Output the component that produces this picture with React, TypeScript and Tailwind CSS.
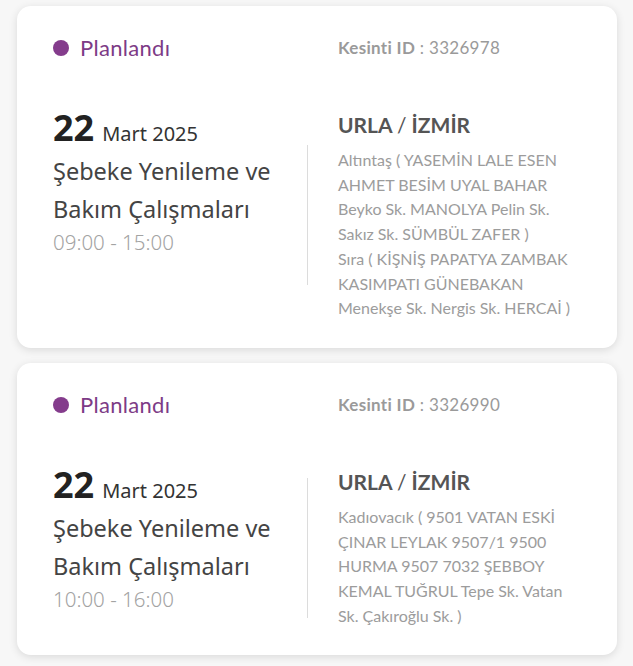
import React from 'react';

type Outage = {
  id: string;
  day: string;
  monthYear: string;
  title: string;
  time: string;
  place: string;
  streets: string[];
};

const outages: Outage[] = [
  {
    id: '3326978',
    day: '22',
    monthYear: 'Mart 2025',
    title: 'Şebeke Yenileme ve Bakım Çalışmaları',
    time: '09:00 - 15:00',
    place: 'İZMİR',
    streets: [
      'Altıntaş ( YASEMİN LALE ESEN AHMET BESİM UYAL BAHAR Beyko Sk. MANOLYA Pelin Sk. Sakız Sk. SÜMBÜL ZAFER )',
      'Sıra ( KİŞNİŞ PAPATYA ZAMBAK KASIMPATI GÜNEBAKAN Menekşe Sk. Nergis Sk. HERCAİ )',
    ],
  },
  {
    id: '3326990',
    day: '22',
    monthYear: 'Mart 2025',
    title: 'Şebeke Yenileme ve Bakım Çalışmaları',
    time: '10:00 - 16:00',
    place: 'İZMİR',
    streets: [
      'Kadıovacık ( 9501 VATAN ESKİ ÇINAR LEYLAK 9507/1 9500 HURMA 9507 7032 ŞEBBOY KEMAL TUĞRUL Tepe Sk. Vatan Sk. Çakıroğlu Sk. )',
    ],
  },
];

function OutageCard({ item }: { item: Outage }) {
  return (
    <div className="bg-white rounded-[14px] shadow-[0_2px_8px_rgba(0,0,0,0.12)] pl-9 pr-9 pt-[28px] pb-[27px]">
      {/* Header row */}
      <div className="flex items-center">
        <div className="w-[285px] flex items-center gap-[11px]">
          <span className="w-4 h-4 rounded-full bg-[#843c8c]" />
          <span className="text-[22px] tracking-[0.3px] text-[#7d3b86] font-['Lato',sans-serif] leading-7">Planlandı</span>
        </div>
        <div className="text-[17px] tracking-[0.3px] text-[#9a9a9a] font-['Lato',sans-serif] leading-7">
          <span className="font-bold">Kesinti ID</span> : {item.id}
        </div>
      </div>

      {/* Body */}
      <div className="flex mt-[48px]">
        <div className="w-[254px] font-['Noto_Sans',sans-serif]">
          <div className="flex items-baseline gap-[8px] leading-[36px]">
            <span className="text-[36px] font-bold text-[#222]">{item.day}</span>
            <span className="text-[20px] text-[#333]">{item.monthYear}</span>
          </div>
          <div className="text-[23.5px] leading-[38px] text-[#444]">{item.title}</div>
          <div className="text-[20.5px] leading-[28px] font-light text-[#a3a3a3]">{item.time}</div>
        </div>
        <div className="self-center w-px h-[140px] bg-[#dcdcdc]" />
        <div className="ml-[30px] w-[236px] font-['Lato',sans-serif]">
          <div className="text-[21px] font-bold text-[#555] leading-[30px]">
            URLA <span className="font-normal">/</span> {item.place}
          </div>
          <div className="text-[16px] text-[#9c9c9c] leading-[24.7px] mt-[8px]">
            {item.streets.map((s) => (
              <div key={s}>{s}</div>
            ))}
          </div>
        </div>
      </div>
    </div>
  );
}

export default function App() {
  return (
    <div className="min-h-screen bg-[#f7f7f7] pt-[6px] pl-[17px] pr-[16px] pb-4 flex flex-col gap-[15px]">
      {outages.map((o) => (
        <OutageCard key={o.id} item={o} />
      ))}
    </div>
  );
}
